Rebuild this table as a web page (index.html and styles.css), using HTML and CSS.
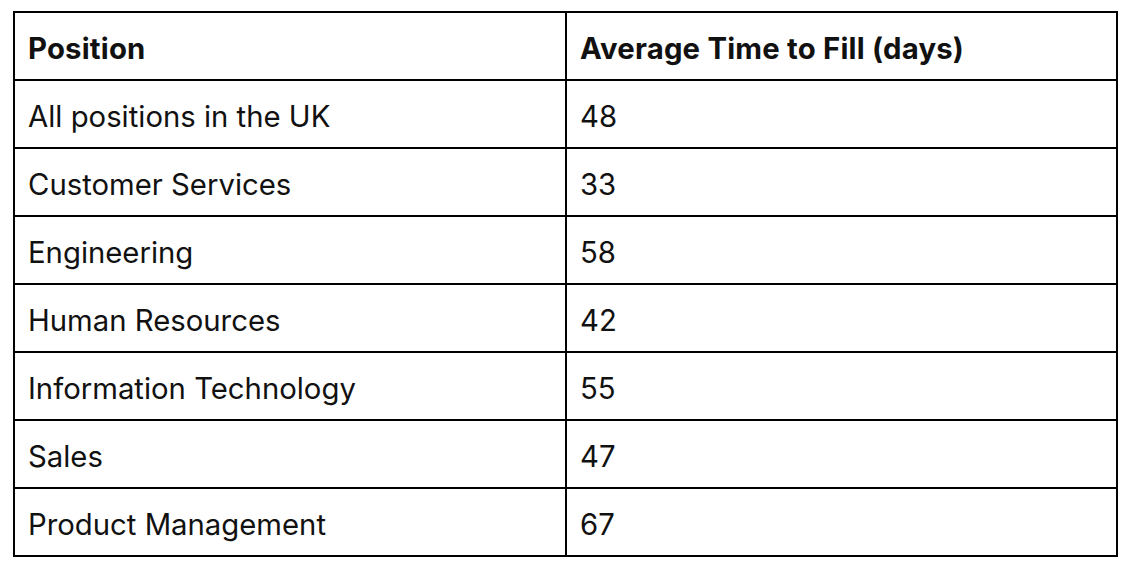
FILE: index.html
```html
<!DOCTYPE html>
<html>
<head>
<meta charset="utf-8">
<link rel="stylesheet" href="styles.css">
</head>
<body>
<div class="wrap">
<table class="data">
<thead>
<tr><th class="c1">Position</th><th>Average Time to Fill (days)</th></tr>
</thead>
<tbody>
<tr><td>All positions in the UK</td><td>48</td></tr>
<tr><td>Customer Services</td><td>33</td></tr>
<tr><td>Engineering</td><td>58</td></tr>
<tr><td>Human Resources</td><td>42</td></tr>
<tr><td>Information Technology</td><td>55</td></tr>
<tr><td>Sales</td><td>47</td></tr>
<tr><td>Product Management</td><td>67</td></tr>
</tbody>
</table>
</div>
</body>
</html>
```
FILE: styles.css
```css
html, body {
  margin: 0;
  padding: 0;
  background: #fff;
}
.wrap {
  padding: 11px 0 0 13px;
}
.data {
  border-collapse: collapse;
  width: 1105px;
  font-family: Inter, "Noto Sans", sans-serif;
  font-size: 29.3px;
  color: #111;
  table-layout: fixed;
}
.data th, .data td {
  border: 2px solid #000;
  height: 68px;
  padding: 4px 13px 0;
  text-align: left;
  box-sizing: border-box;
  font-weight: 400;
  vertical-align: middle;
}
.data th {
  font-weight: 700;
  letter-spacing: 0.2px;
}
.data .c1 {
  width: 552px;
}
```
